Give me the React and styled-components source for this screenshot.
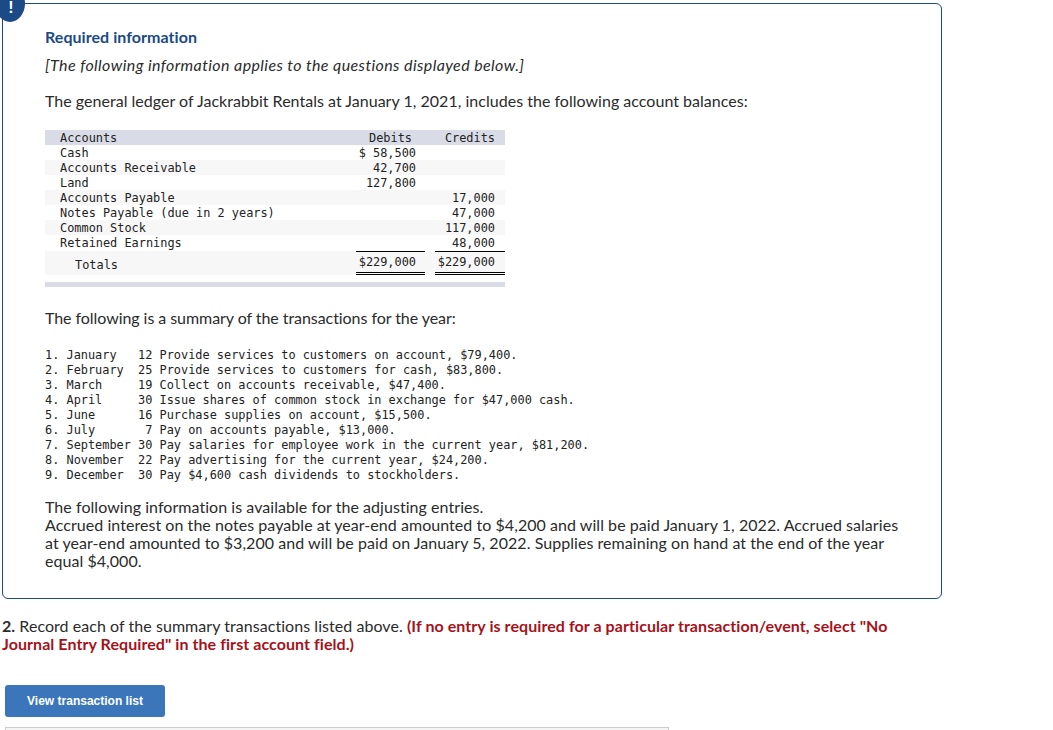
import React from 'react';
import styled, { createGlobalStyle } from 'styled-components';

const GlobalStyle = createGlobalStyle`
  html, body {
    margin: 0;
    padding: 0;
    background: #fff;
    overflow: hidden;
    height: 730px;
  }
  body {
    font-family: Lato, "Open Sans", sans-serif;
    font-size: 16px;
    line-height: 18px;
    color: #2b2b2b;
  }
`;

const Page = styled.div`
  width: 1053px;
  height: 730px;
  overflow: hidden;
  position: relative;
`;

const InfoBox = styled.section`
  position: relative;
  box-sizing: border-box;
  width: 940px;
  height: 596px;
  margin: 3px 0 0 2px;
  padding: 24px 42px 0 42px;
  border: 1px solid #1b4a87;
  border-radius: 6px;
`;

const Badge = styled.div`
  position: absolute;
  left: -8px;
  top: -19px;
  width: 30px;
  height: 37px;
  border-radius: 50%;
  background: #1b4a87;
  color: #fff;
  font-family: "Liberation Sans", sans-serif;
  font-weight: 700;
  font-size: 16px;
  line-height: 16px;
  text-align: center;
  padding: 15px 0 0 2px;
  box-sizing: border-box;
`;

const Heading = styled.h3`
  margin: 0;
  font-size: 16px;
  line-height: 18px;
  font-weight: 700;
  letter-spacing: 0.05px;
  color: #1b4a87;
`;

const Note = styled.p`
  margin: ${(p) => p.$top || 0}px 0 0;
  font-style: ${(p) => (p.$italic ? 'italic' : 'normal')};
  letter-spacing: ${(p) => p.$track || 0}px;
`;

const Ledger = styled.div`
  margin-top: 20px;
  width: 460px;
  font-family: "DejaVu Sans Mono", monospace;
  font-size: 11.9px;
  line-height: 15px;
  color: #222;
`;

const Row = styled.div`
  display: grid;
  box-sizing: border-box;
  grid-template-columns: 301px 69px 70px;
  column-gap: 10px;
  height: ${(p) => p.$height || 15}px;
  padding-top: ${(p) => (p.$flush ? 0 : 1)}px;
  background: ${(p) => p.$bg || '#fff'};
`;

const Account = styled.div`
  padding-left: ${(p) => p.$indent || 15}px;
  white-space: pre;
  ${(p) => (p.$total ? 'line-height: 28px;' : '')}
`;

const Amount = styled.div`
  box-sizing: border-box;
  text-align: right;
  padding-right: ${(p) => p.$pad ?? 10}px;
  white-space: pre;
  ${(p) => (p.$under ? 'border-bottom: 1px solid #000;' : '')}
  ${(p) =>
    p.$total
      ? 'border-bottom: 3px double #000; line-height: 22px; height: 24px;'
      : ''}
`;

const LedgerEnd = styled.div`
  margin-top: 7px;
  height: 5px;
  background: #d9dce6;
`;

const Transactions = styled.pre`
  margin: 21px 0 0;
  font-family: "DejaVu Sans Mono", monospace;
  font-size: 11.9px;
  line-height: 15px;
  color: #222;
`;

const Question = styled.p`
  margin: 18px 0 0 2px;
  width: 920px;
  letter-spacing: 0.05px;
`;

const Num = styled.b`
  font-weight: 700;
`;

const Warn = styled.b`
  font-weight: 700;
  letter-spacing: 0.07px;
  color: #a6121a;
`;

const ListButton = styled.button`
  display: block;
  margin: 32px 0 0 5px;
  width: 160px;
  height: 32px;
  padding: 0;
  border: 0;
  border-radius: 3px;
  background: #3b76bb;
  color: #fff;
  font-family: "Liberation Sans", Arial, sans-serif;
  font-size: 12px;
  font-weight: 700;
`;

const EntryPanel = styled.div`
  margin: 10px 0 0 5px;
  width: 664px;
  height: 60px;
  box-sizing: border-box;
  border: 1px solid #ccc;
  background: #f5f5f5;
`;

const rows = [
  ['Cash', '$ 58,500', '', '#fff'],
  ['Accounts Receivable', '42,700', '', '#f7f7f7'],
  ['Land', '127,800', '', '#fff'],
  ['Accounts Payable', '', '17,000', '#f7f7f7'],
  ['Notes Payable (due in 2 years)', '', '47,000', '#fff'],
  ['Common Stock', '', '117,000', '#f7f7f7'],
];

const transactions = `1. January   12 Provide services to customers on account, $79,400.
2. February  25 Provide services to customers for cash, $83,800.
3. March     19 Collect on accounts receivable, $47,400.
4. April     30 Issue shares of common stock in exchange for $47,000 cash.
5. June      16 Purchase supplies on account, $15,500.
6. July       7 Pay on accounts payable, $13,000.
7. September 30 Pay salaries for employee work in the current year, $81,200.
8. November  22 Pay advertising for the current year, $24,200.
9. December  30 Pay $4,600 cash dividends to stockholders.`;

export default function App() {
  return (
    <Page>
      <GlobalStyle />
      <InfoBox>
        <Badge>!</Badge>
        <Heading>Required information</Heading>
        <Note $italic $track={0.4} $top={10}>[The following information applies to the questions displayed below.]</Note>
        <Note $track={0.02} $top={18}>The general ledger of Jackrabbit Rentals at January 1, 2021, includes the following account balances:</Note>

        <Ledger>
          <Row $bg="#d9dce6">
            <Account>Accounts</Account>
            <Amount $pad={13}>Debits</Amount>
            <Amount>Credits</Amount>
          </Row>
          {rows.map((r) => (
            <Row key={r[0]} $bg={r[3]}>
              <Account>{r[0]}</Account>
              <Amount $pad={r[1] ? 9 : 10}>{r[1]}</Amount>
              <Amount>{r[2]}</Amount>
            </Row>
          ))}
          <Row $height={16}>
            <Account>Retained Earnings</Account>
            <Amount $under />
            <Amount $under>48,000</Amount>
          </Row>
          <Row $bg="#f7f7f7" $height={24} $flush>
            <Account $indent={30} $total>Totals</Account>
            <Amount $total $pad={9}>$229,000</Amount>
            <Amount $total>$229,000</Amount>
          </Row>
          <LedgerEnd />
        </Ledger>

        <Note $track={-0.06} $top={22}>The following is a summary of the transactions for the year:</Note>
        <Transactions>{transactions}</Transactions>
        <Note $track={0.05} $top={15}>
          The following information is available for the adjusting entries.
          <br />
          Accrued interest on the notes payable at year-end amounted to $4,200 and will be paid January 1, 2022. Accrued salaries
          <br />
          at year-end amounted to $3,200 and will be paid on January 5, 2022. Supplies remaining on hand at the end of the year
          <br />
          equal $4,000.
        </Note>
      </InfoBox>

      <Question>
        <Num>2.</Num> Record each of the summary transactions listed above. <Warn>(If no entry is required for a particular transaction/event, select "No<br />Journal Entry Required" in the first account field.)</Warn>
      </Question>

      <ListButton>View transaction list</ListButton>
      <EntryPanel />
    </Page>
  );
}
